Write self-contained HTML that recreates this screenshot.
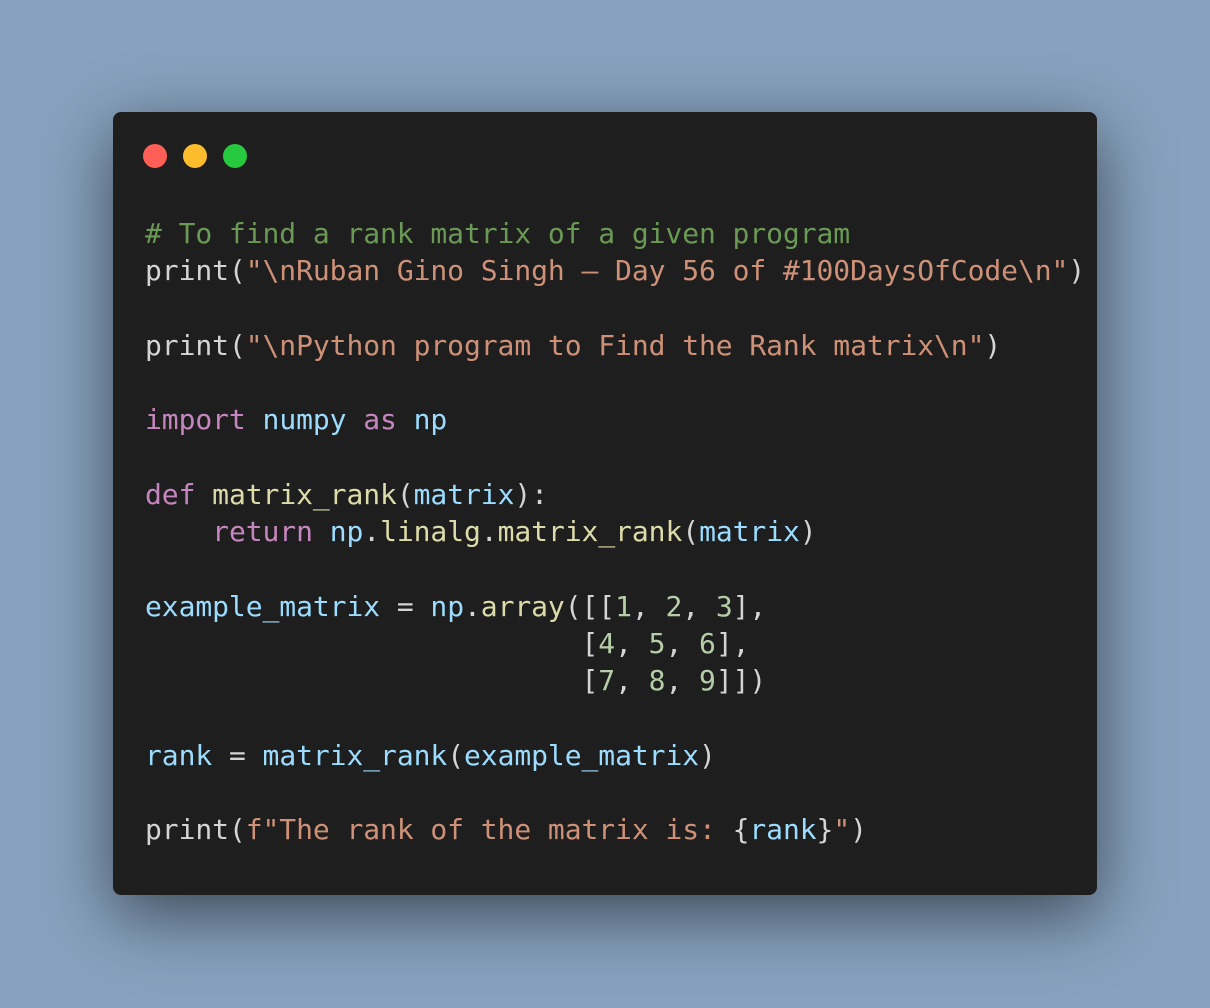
<!DOCTYPE html>
<html><head><meta charset="utf-8"><style>
html,body{margin:0;padding:0}
body{width:1210px;height:1008px;background:#87a1be;position:relative;overflow:hidden}
.win{position:absolute;left:113px;top:112px;width:984px;height:783px;background:#1e1e1e;border-radius:8px;box-shadow:0 20px 68px rgba(0,0,0,0.55)}
.dot{position:absolute;top:144px;width:24px;height:24px;border-radius:50%}
pre{position:absolute;left:145px;top:215px;margin:0;font-family:"DejaVu Sans Mono","Liberation Mono",monospace;font-size:28px;line-height:37.25px;color:#d4d4d4;letter-spacing:-0.07px}
.c{color:#6a9955}.s{color:#ce9178}.k{color:#c586c0}.v{color:#9cdcfe}.f{color:#dcdcaa}.n{color:#b5cea8}
</style></head><body>
<div class="win"></div>
<div class="dot" style="left:143px;background:#ff5f56"></div>
<div class="dot" style="left:183px;background:#ffbd2e"></div>
<div class="dot" style="left:223px;background:#27c93f"></div>
<pre><span class="c"># To find a rank matrix of a given program</span>
print(<span class="s">"\nRuban Gino Singh – Day 56 of #100DaysOfCode\n"</span>)

print(<span class="s">"\nPython program to Find the Rank matrix\n"</span>)

<span class="k">import</span> <span class="v">numpy</span> <span class="k">as</span> <span class="v">np</span>

<span class="k">def</span> <span class="f">matrix_rank</span>(<span class="v">matrix</span>):
    <span class="k">return</span> <span class="v">np</span>.<span class="f">linalg</span>.<span class="f">matrix_rank</span>(<span class="v">matrix</span>)

<span class="v">example_matrix</span> = <span class="v">np</span>.<span class="f">array</span>([[<span class="n">1</span>, <span class="n">2</span>, <span class="n">3</span>],
                          [<span class="n">4</span>, <span class="n">5</span>, <span class="n">6</span>],
                          [<span class="n">7</span>, <span class="n">8</span>, <span class="n">9</span>]])

<span class="v">rank</span> = <span class="v">matrix_rank</span>(<span class="v">example_matrix</span>)

print(<span class="s">f"The rank of the matrix is: </span>{<span class="v">rank</span>}<span class="s">"</span>)</pre>
</body></html>
